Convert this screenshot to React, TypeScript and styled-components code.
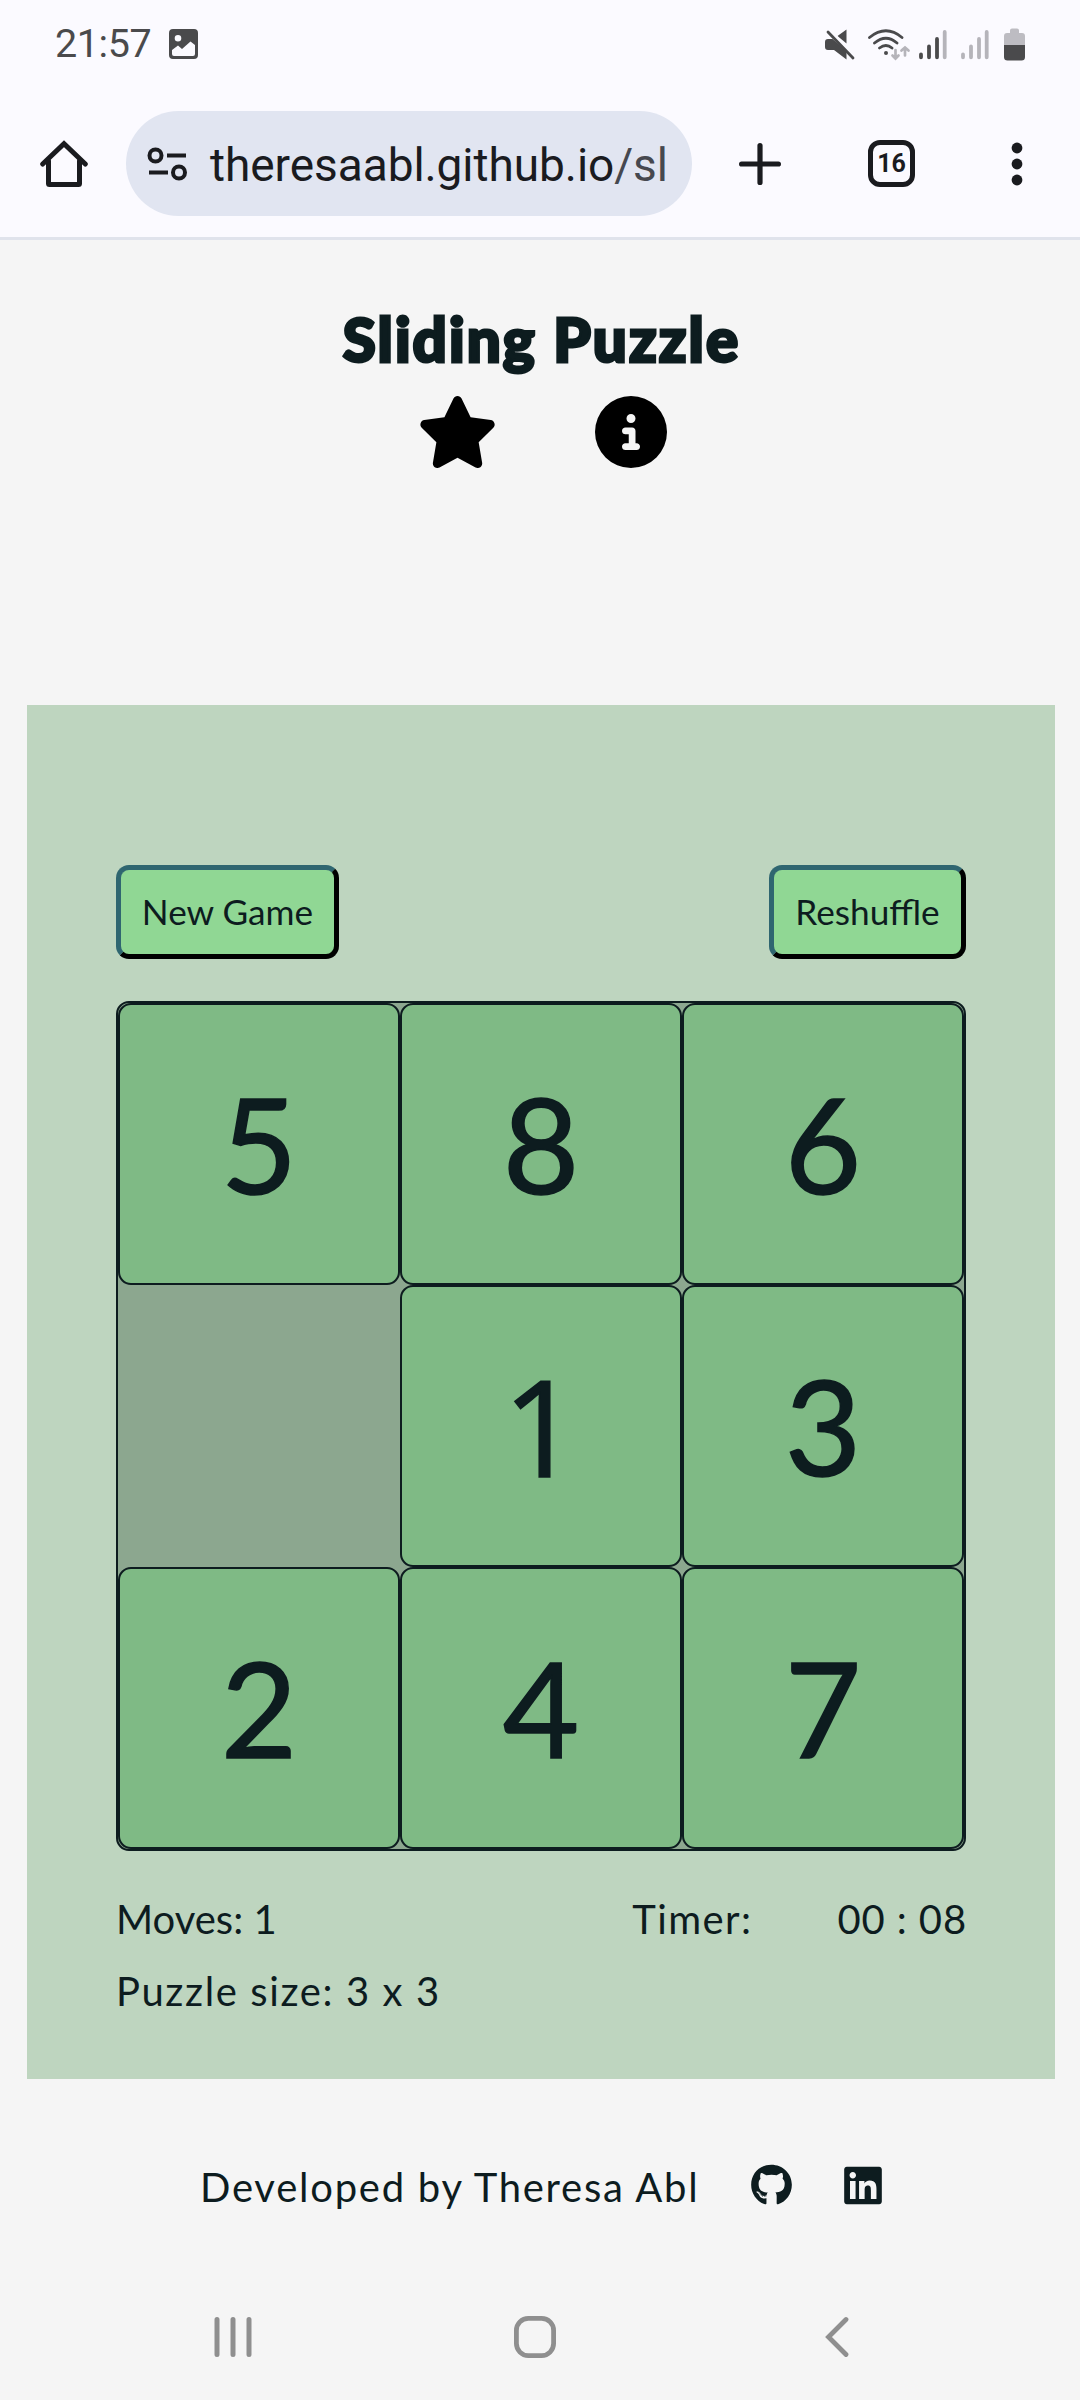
import React from 'react';
import styled, { createGlobalStyle } from 'styled-components';
import { FaStar, FaCircleInfo, FaGithub, FaLinkedin } from 'react-icons/fa6';

const ink = '#0d1c1f';

const GlobalStyle = createGlobalStyle`
  * { box-sizing: border-box; }
  body { margin: 0; background: #f5f5f5; }
`;

const Screen = styled.div`
  width: 1080px;
  height: 2400px;
  display: flex;
  flex-direction: column;
  background: #f5f5f5;
  color: ${ink};
  font-family: Lato, sans-serif;
  overflow: hidden;
`;

const BrowserHeader = styled.header`
  height: 240px;
  flex: none;
  background: #fbfaff;
  border-bottom: 3px solid #e0e3ec;
  font-family: Roboto, sans-serif;
`;

const StatusBar = styled.div`
  height: 88px;
  display: flex;
  align-items: center;
  justify-content: space-between;
  padding: 0 54px 0 55px;
`;

const StatusGroup = styled.div`
  display: flex;
  align-items: center;
`;

const Clock = styled.span`
  font-size: 39.5px;
  line-height: 46px;
  color: #4a4a4c;
  width: 114px;
  letter-spacing: -0.4px;
`;

const AddressBar = styled.div`
  height: 149px;
  display: flex;
  align-items: center;
  padding: 2px 33px 0 33px;
`;

const IconSlot = styled.div<{ $w: number; $gap?: number }>`
  width: ${p => p.$w}px;
  margin-left: ${p => p.$gap ?? 0}px;
  display: flex;
  justify-content: center;
  flex: none;
`;

const UrlPill = styled.div`
  width: 566px;
  height: 105px;
  margin-left: 32px;
  border-radius: 53px;
  background: #e1e5f1;
  display: flex;
  align-items: center;
  padding-left: 21px;
`;

const Url = styled.span`
  margin-left: 23px;
  padding-top: 2px;
  font-size: 46px;
  line-height: 56px;
  letter-spacing: -0.06px;
  white-space: nowrap;
  color: #1a1b1f;
`;

const UrlPath = styled.span`
  color: #46484f;
`;

const TabCount = styled.div`
  width: 47px;
  height: 47px;
  border: 5.5px solid #1a1b1f;
  border-radius: 12px;
  display: flex;
  align-items: center;
  justify-content: center;
  font-size: 25px;
  line-height: 26px;
  font-weight: 700;
  color: #1a1b1f;
`;

const TitleArea = styled.div`
  height: 465px;
  flex: none;
  display: flex;
  flex-direction: column;
  align-items: center;
  padding-top: 63px;
`;

const Title = styled.h1`
  margin: 0 0 0 3px;
  font-size: 60px;
  line-height: 72px;
  font-weight: 900;
  letter-spacing: 2.1px;
  -webkit-text-stroke: 3px ${ink};
  white-space: nowrap;
`;

const MenuIcons = styled.div`
  display: flex;
  align-items: center;
  gap: 97px;
  margin-top: 21px;
  margin-left: 3px;
  color: #000;
`;

const StarIcon = styled(FaStar)`
  width: 81px;
  height: 72px;
`;

const InfoIcon = styled(FaCircleInfo)`
  width: 72px;
  height: 72px;
`;

const Panel = styled.main`
  width: 1028px;
  height: 1374px;
  flex: none;
  margin-left: 27px;
  padding: 160px 89px 0;
  background: #bed5bf;
`;

const ButtonRow = styled.div`
  display: flex;
  justify-content: space-between;
`;

const GameButton = styled.button<{ $w: number }>`
  width: ${p => p.$w}px;
  height: 94px;
  padding: 0 0 2px;
  border: 5px solid;
  border-color: #2f6670 #000 #000 #2f6670;
  border-radius: 13px;
  background: #90d794;
  color: ${ink};
  font-family: Lato, sans-serif;
  font-size: 35.2px;
  white-space: nowrap;
`;

const Board = styled.div`
  width: 850px;
  height: 850px;
  margin-top: 42px;
  border: 2px solid ${ink};
  border-radius: 13px;
  background: #8ca78f;
  display: grid;
  grid-template-columns: repeat(3, 282px);
  grid-auto-rows: 282px;
`;

const Tile = styled.div<{ $plain: boolean }>`
  border: 2px solid ${ink};
  border-radius: 13px;
  background: #7fba85;
  display: flex;
  align-items: center;
  justify-content: center;
  font-family: ${p => (p.$plain ? "'Open Sans', sans-serif" : 'Lato, sans-serif')};
  font-size: ${p => (p.$plain ? 134 : 132)}px;
  line-height: 158px;
  -webkit-text-stroke: 1.5px ${ink};
  padding-bottom: ${p => (p.$plain ? 2 : 3)}px;
`;

const EmptyTile = styled.div``;

const Stats = styled.div`
  display: flex;
  justify-content: space-between;
  margin-top: 43px;
`;

const StatText = styled.span<{ $spacing?: number }>`
  display: block;
  font-size: 40px;
  line-height: 50px;
  letter-spacing: ${p => p.$spacing ?? 0}px;
  white-space: pre;
`;

const TimerGroup = styled.div`
  display: flex;
  gap: 85px;
  margin-right: -1px;
`;

const SizeRow = styled.div`
  margin-top: 22px;
`;

const Footer = styled.footer`
  height: 211px;
  flex: none;
  display: flex;
  align-items: flex-start;
  padding: 83px 0 0 200px;
`;

const Credit = styled.div`
  width: 550px;
`;

const GithubIcon = styled(FaGithub)`
  width: 43px;
  height: 42px;
  margin-top: 2px;
`;

const LinkedinIcon = styled(FaLinkedin)`
  width: 38px;
  height: 43px;
  margin: 2px 0 0 51px;
`;

const SystemNav = styled.nav`
  height: 110px;
  display: flex;
  align-items: center;
  padding: 0 231px 16px 214px;
`;

const NavButton = styled.div<{ $gap?: number }>`
  display: flex;
  margin-left: ${p => p.$gap ?? 0}px;
`;

function ImageIcon() {
  return (
    <svg width="29" height="30" viewBox="0 0 29 30">
      <path fillRule="evenodd" fill="#4a4a4c" d="M4 0H25Q29 0 29 4V26Q29 30 25 30H4Q0 30 0 26V4Q0 0 4 0ZM9 6A3.3 3.3 0 1 0 9 12.6A3.3 3.3 0 1 0 9 6ZM3 21V25Q3 27 5 27H24Q26 27 26 25V16L21.5 12.5L13 20L9 16.5Z" />
    </svg>
  );
}

function StatusIcons() {
  const dark = '#4a4a4c';
  const light = '#b5b4ba';
  return (
    <svg width="204" height="36" viewBox="822 26 204 36" fill="none" strokeLinecap="round">
      <path fill={dark} d="M846.5 29.5V43.500L837.500 36ZM828 39H832.500L846.500 51V59.500L834 50H828Q825 50 825 47V42Q825 39 828 39Z" />
      <path stroke="#fbfaff" strokeWidth="2.400" strokeLinecap="butt" d="M831 31L853 54" />
      <path stroke={dark} strokeWidth="2.8" d="M828 32L853 58" />
      <path stroke={dark} strokeWidth="2.8" d="M869.5 37.5Q886 24 902 37.5M874.500 43Q886 33.500 897 43M879.500 48Q886 43 892 48" />
      <circle cx="886" cy="53" r="2" fill={dark} />
      <path stroke={light} strokeWidth="2.7" d="M895.500 50V58M892.500 55.500L895.500 58.500L898.500 55.500M905 48V55.500M901.500 50.500L905 47.500L908.500 50.500" />
      <path stroke={dark} strokeWidth="3.8" d="M921 54.500V57.300M929 46.500V57.300M937 39V57.300" />
      <path stroke={light} strokeWidth="3.8" d="M944.700 32V57.300M963 54.500V57.300M971 46.500V57.300M979 39V57.300M986.700 32V57.300" />
      <path fill="#bdbcc2" d="M1004 45V36Q1004 33 1007 33H1010V30.500Q1010 28.500 1012 28.500H1017Q1019 28.500 1019 30.500V33H1022Q1025 33 1025 36V45Z" />
      <path fill={dark} d="M1004 45H1025V57Q1025 60.500 1021.500 60.500H1007.500Q1004 60.500 1004 57Z" />
    </svg>
  );
}

function HomeIcon() {
  return (
    <svg width="48" height="48" viewBox="0 0 48 48" fill="none" stroke="#1a1b1f" strokeWidth="5" strokeLinejoin="round" strokeLinecap="round">
      <path d="M8.500 21V43.500Q8.500 44.500 9.500 44.500H38.500Q39.500 44.500 39.500 43.500V21" />
      <path strokeLinejoin="miter" d="M2.700 24L24 3.700L45.300 24" />
    </svg>
  );
}

function TuneIcon() {
  return (
    <svg width="40" height="34" viewBox="0 0 40 34" fill="none" stroke="#1a1b1f" strokeWidth="4">
      <circle cx="8.500" cy="8.500" r="6" />
      <circle cx="32" cy="25.500" r="6" />
      <path d="M20 8.500H39M2 25.500H21" />
    </svg>
  );
}

function PlusIcon() {
  return (
    <svg width="42" height="42" viewBox="0 0 42 42" stroke="#1a1b1f" strokeWidth="5.200" strokeLinecap="round">
      <path d="M21 2.600V39.400M2.600 21H39.400" />
    </svg>
  );
}

function MoreIcon() {
  return (
    <svg width="12" height="44" viewBox="0 0 12 44" fill="#1a1b1f">
      <circle cx="6" cy="6" r="5.400" />
      <circle cx="6" cy="22" r="5.400" />
      <circle cx="6" cy="38" r="5.400" />
    </svg>
  );
}

function RecentsIcon() {
  return (
    <svg width="40" height="42" viewBox="0 0 40 42" stroke="#8f8f8f" strokeWidth="5" strokeLinecap="round">
      <path d="M3 3.500V38.500M19 3.500V38.500M35 3.500V38.500" />
    </svg>
  );
}

function HomeNavIcon() {
  return (
    <svg width="42" height="42" viewBox="0 0 42 42" fill="none" stroke="#8f8f8f" strokeWidth="4.800">
      <rect x="2.400" y="2.400" width="37.200" height="37.200" rx="12" />
    </svg>
  );
}

function BackIcon() {
  return (
    <svg width="24" height="42" viewBox="0 0 24 42" fill="none" stroke="#8f8f8f" strokeWidth="4.800" strokeLinecap="round">
      <path d="M21 3.500L3.500 21L21 38.500" />
    </svg>
  );
}

const tiles: (number | null)[] = [5, 8, 6, null, 1, 3, 2, 4, 7];

export default function App() {
  return (
    <Screen>
      <GlobalStyle />
      <BrowserHeader>
        <StatusBar>
          <StatusGroup>
            <Clock>21:57</Clock>
            <ImageIcon />
          </StatusGroup>
          <StatusIcons />
        </StatusBar>
        <AddressBar>
          <IconSlot $w={61}><HomeIcon /></IconSlot>
          <UrlPill>
            <TuneIcon />
            <Url>theresaabl.github.io<UrlPath>/sl</UrlPath></Url>
          </UrlPill>
          <IconSlot $w={48} $gap={44}><PlusIcon /></IconSlot>
          <IconSlot $w={47} $gap={84}><TabCount>16</TabCount></IconSlot>
          <IconSlot $w={12} $gap={96}><MoreIcon /></IconSlot>
        </AddressBar>
      </BrowserHeader>
      <TitleArea>
        <Title>Sliding Puzzle</Title>
        <MenuIcons>
          <StarIcon />
          <InfoIcon />
        </MenuIcons>
      </TitleArea>
      <Panel>
        <ButtonRow>
          <GameButton $w={223}>New Game</GameButton>
          <GameButton $w={197}>Reshuffle</GameButton>
        </ButtonRow>
        <Board>
          {tiles.map((n, i) => (n === null ? <EmptyTile key={i} /> : <Tile key={i} $plain={n === 1}>{n}</Tile>))}
        </Board>
        <Stats>
          <StatText>Moves: 1</StatText>
          <TimerGroup>
            <StatText $spacing={1.4}>Timer:</StatText>
            <StatText $spacing={0.9}>00 : 08</StatText>
          </TimerGroup>
        </Stats>
        <SizeRow>
          <StatText $spacing={1.6}>Puzzle size: 3 x 3</StatText>
        </SizeRow>
      </Panel>
      <Footer>
        <Credit><StatText $spacing={1.75}>Developed by Theresa Abl</StatText></Credit>
        <GithubIcon />
        <LinkedinIcon />
      </Footer>
      <SystemNav>
        <NavButton><RecentsIcon /></NavButton>
        <NavButton $gap={260}><HomeNavIcon /></NavButton>
        <NavButton $gap={269}><BackIcon /></NavButton>
      </SystemNav>
    </Screen>
  );
}
